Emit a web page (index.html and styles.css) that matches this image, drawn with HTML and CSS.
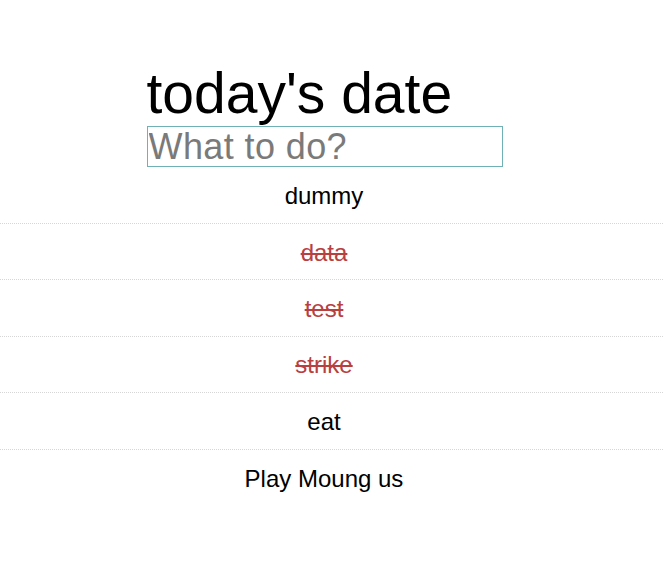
FILE: index.html
```html
<!DOCTYPE html>
<html>
<head>
<meta charset="utf-8">
<link rel="stylesheet" href="styles.css">
</head>
<body>
<div class="app">
  <header class="header">
    <h1 class="title">today's date</h1>
    <input class="todo-input" type="text" placeholder="What to do?">
  </header>
  <ul class="todo-list">
    <li class="todo">dummy</li>
    <li class="todo done">data</li>
    <li class="todo done">test</li>
    <li class="todo done">strike</li>
    <li class="todo">eat</li>
    <li class="todo last">Play Moung us</li>
  </ul>
</div>
</body>
</html>
```
FILE: styles.css
```css
html, body {
  margin: 0;
  padding: 0;
  background: #fff;
}
body {
  font-family: "Liberation Sans", Arial, sans-serif;
  color: #000;
}
.app {
  display: flex;
  flex-direction: column;
}
.header {
  display: flex;
  flex-direction: column;
  width: 356px;
  margin: 0 auto;
  padding-top: 61px;
  position: relative;
  left: -7px;
}
.title {
  margin: 0 0 1px 0;
  font-size: 57px;
  line-height: 64px;
  font-weight: 400;
}
.todo-input {
  box-sizing: border-box;
  width: 356px;
  height: 41px;
  margin: 0;
  padding: 0 0 0 1px;
  border: 1.5px solid #6fb1b4;
  font-family: "Liberation Sans", Arial, sans-serif;
  font-size: 36px;
  letter-spacing: 0.4px;
  outline: none;
}
.todo-input::placeholder {
  color: #7a7a7a;
}
.todo-list {
  list-style: none;
  margin: 0;
  padding: 0;
}
.todo {
  height: 56.4px;
  box-sizing: border-box;
  display: flex;
  align-items: center;
  justify-content: center;
  padding-right: 15px;
  padding-top: 2px;
  font-size: 24px;
  border-bottom: 1px dotted #d6d6d6;
}
.todo:first-child {
  height: 57px;
}
.todo.last {
  border-bottom: none;
}
.done {
  color: #b8403f;
  text-decoration: line-through;
  text-decoration-thickness: 2px;
}
```
